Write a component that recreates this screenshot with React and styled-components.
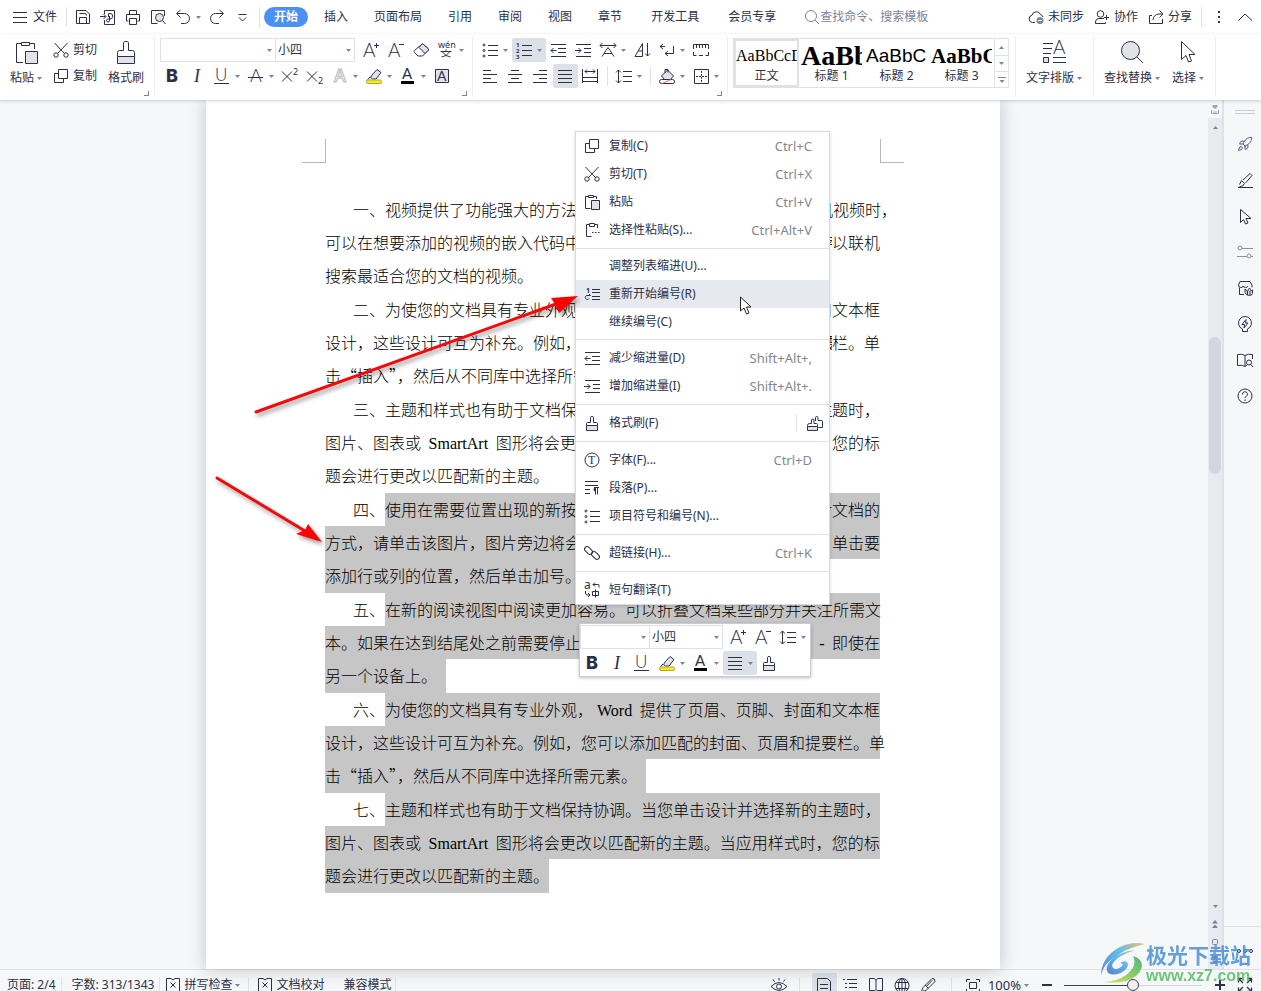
import React from "react";
import styled, { createGlobalStyle, css } from "styled-components";
import { Rocket } from "lucide-react";

const ink = "#2b3048";
const line = "#dfe1e8";
const soft = "#7a84a0";
const uiFont = `"Noto Sans", "Noto Sans CJK SC", sans-serif`;

const GlobalStyle = createGlobalStyle`
    * { box-sizing: border-box; }
    body {
        margin: 0;
        overflow: hidden;
        background: #f5f7f9;
        color: ${ink};
        font-family: ${uiFont};
        font-size: 12px;
        line-height: 16px;
    }
    button, input, select {
        font: inherit;
        color: inherit;
    }
`;

/* ---------- icons ---------- */

const Svg = styled.svg`
    display: block;
    flex: none;
    fill: none;
    stroke: ${(props) => props.$tone || ink};
    stroke-width: 1;
    overflow: visible;

    text {
        stroke: none;
        fill: ${ink};
    }
    .fill { fill: #e1e3e9; }
    .white { fill: #fff; }
    .solid { fill: ${ink}; stroke: none; }
`;

const thin = { fontFamily: "Lato", fontWeight: 300 };

const glyphs = {
    menu: <path d="M1 3.5h14M1 8.5h14M1 13.5h14" />,
    save: <path d="M1.5 14.5v-13h9.5l3.5 3.5v9.5zM4.5 14.5v-6h7v6M4.5 4.5h5q2 0 2 2" />,
    exportPdf: <path d="M4.5 5V1.5h10v14h-10V11M0 7.5h5.500M3.500 5l2.500 2.500L3.500 10M8.500 8V4.500h1.500a2.500 2.500 0 0 1 0 5.500H8a1.500 1.500 0 1 0 1.500 1.500V7" />,
    print: <><path d="M4.500 5V1.500h7V5M3.500 12h-2V5.500h13V12h-2" /><path className="white" d="M4.500 9.500h7v6h-7z" /></>,
    preview: <><path d="M14.500 7V1.500h-13v13h6" /><circle className="fill" cx="9.500" cy="8.500" r="4" /><path d="M12.500 11.500l3 3.500" /></>,
    undo: <path d="M5.500 1L1.500 4.500l4 4M2 4.500h7.500a5 5 0 0 1 0 10H6" />,
    redo: <path d="M10.500 1l4 3.500-4 4M14 4.500H6.500a5 5 0 0 0 0 10H10" />,
    more: <path d="M4.500 5.500h8M5 8.500l3.500 3.500L12 8.500" />,
    search: <><circle cx="7" cy="7" r="5.500" /><path d="M11 11l4 4" /></>,
    cloud: <><path d="M7 13.500H4.500a3.700 3.700 0 0 1-.5-7.300 4.500 4.500 0 0 1 8.600-.5 3.500 3.500 0 0 1 2.400 2.300" /><circle cx="12" cy="11.500" r="3.500" fill="#7a84a0" stroke="none" /><path stroke="#fff" d="M10 11.500h4" /></>,
    person: <><circle cx="6.500" cy="5" r="3.300" /><path d="M10 9.500H5a3.500 3.500 0 0 0-3.500 3.500v1.500h10V13M12.500 6v5M10 8.500h5" /></>,
    share: <><path d="M11.500 1.500L15 5l-3.500 3.500M14.500 5H11a6 6 0 0 0-6 6" /><path d="M4 6.500H1.500v8h13V10" /></>,
    dots: <path className="solid" d="M7 2h2v2H7zM7 7h2v2H7zM7 12h2v2H7z" />,
    chevron: <path d="M1.500 11.500L8 5l7 6.500" />,
    paste: <><path d="M7 3.500H2.500v19H9M15 3.500h5.500V9M7.500 2.500h8v3h-8z" /><path className="fill" d="M11.500 11.500h12v12h-12z" /></>,
    cut: <><circle cx="3" cy="13" r="2.200" /><circle cx="13" cy="13" r="2.200" /><path d="M1.500 1l10 10.500M14.500 1l-10 10.500" /></>,
    copy: <path d="M5.500 1.500h9v9h-9zM5.500 5.500h-4v9h9v-4" />,
    brushBig: <><path d="M9.500 10.500v-8q0-1 2.500-1t2.500 1v8h4q2 0 2 2v4h-17v-4q0-2 2-2z" /><path className="fill" d="M3.500 16.500h17v7h-17z" /></>,
    grow: <><text x="0" y="15" fontSize="19" style={thin}>A</text><path d="M11 3.500h5M13.500 1v5" /></>,
    shrink: <><text x="0" y="15" fontSize="19" style={thin}>A</text><path d="M11 2.500h5" /></>,
    eraser: <><path d="M8.500 2.500q1-1 2 0l4.500 4q1 1 0 2l-5.500 5.500H5l-3.500-3.500q-1-1 0-2z" /><path className="fill" d="M8.500 2.500q1-1 2 0l4.500 4q1 1 0 2l-3 3-6-6z" /></>,
    pinyin: <><text x="0" y="6" fontSize="9">wén</text><path d="M8 7.500v2M2.500 9.500h11M4.500 10q3 4.500 8 5M11.500 10q-3 4.500-8 5" /></>,
    bold: <text x="2" y="14" fontSize="18" fontWeight="800" fontFamily="Inter">B</text>,
    italic: <text x="5" y="14" fontSize="18" fontStyle="italic" fontFamily="Liberation Serif">I</text>,
    underline: <><text x="1" y="13" fontSize="17" style={thin}>U</text><path d="M0 15.500h15" /></>,
    strike: <><text x="2" y="14" fontSize="18" style={thin}>A</text><path d="M0 9.500h15" /></>,
    sup: <><path d="M0 3.500l10 10M10 3.500l-10 10" /><text x="11" y="7" fontSize="9">2</text></>,
    sub: <><path d="M0 3.500l10 10M10 3.500l-10 10" /><text x="11" y="16" fontSize="9">2</text></>,
    effect: <text x="2" y="14" fontSize="18" fontFamily="Open Sans" fontWeight="600" style={{ fill: "#fff", stroke: "#b4b7c0" }}>A</text>,
    marker: <><path className="fill" d="M6 7l5-5.500 4 3L10 11H6.500L4.500 9.500z" /><path d="M4 9l-2.500 3" /><rect x="0.500" y="12" width="15" height="3.500" rx="1.500" fill="#ffee00" stroke="#a9a45a" /></>,
    fontColor: <><text x="2" y="11" fontSize="15" fontFamily="Lato">A</text><path d="M1 14.500h13" stroke="#000" strokeWidth="3" /></>,
    boxed: <><path className="fill" d="M1.500 1.500h13v13h-13z" /><text x="3" y="13" fontSize="14" fontFamily="Lato">A</text></>,
    bullets: <><circle cx="2" cy="3" r="1" /><circle cx="2" cy="8.500" r="1" /><circle cx="2" cy="14" r="1" /><path d="M6 3.500h10M6 8.500h10M6 13.500h10" /></>,
    numbers: <><text x="0" y="5" fontSize="6" fontWeight="700">1</text><text x="0" y="11" fontSize="6" fontWeight="700">2</text><text x="0" y="17" fontSize="6" fontWeight="700">3</text><path d="M6 3.500h10M6 8.500h10M6 13.500h10" /></>,
    outdent: <path d="M1 2.500h15M8 6.500h8M8 10.500h8M1 14.500h15M1 8.500h5.500M3.500 6L1 8.500 3.500 11" />,
    indent: <path d="M1 2.500h15M9 6.500h7M9 10.500h7M1 14.500h15M0 8.500h6M3.500 6L6 8.500 3.500 11" />,
    scale: <path d="M0 3.500h16M2.500 1L0 3.500 2.500 6M13.500 1L16 3.500 13.500 6M2 14.500l6-9 6 9M4 11.500h8" />,
    sort: <path d="M1 14.500L8.500 1.500V14.500zM4.500 9h4M13.500 1v13M11 11.500l2.500 2.500 2.500-2.500" />,
    wrap: <path d="M4 2L1 4.500 4 7M1 4.500h5M14.500 4v7.500H6M9 9l-3 2.500L9 14" />,
    ruler: <path d="M.5 7V2.500h15V7M3.500 3v3M6.500 3v3M9.500 3v3M12.500 3v3M.5 10v3.500h3M6 13.500h4M15.500 10v3.500h-3" />,
    left: <path d="M1 2.500h8M1 6.500h14M1 10.500h8M1 14.500h14" />,
    center: <path d="M4 2.500h8M1 6.500h14M4 10.500h8M1 14.500h14" />,
    right: <path d="M7 2.500h8M1 6.500h14M7 10.500h8M1 14.500h14" />,
    justify: <path d="M1 2.500h14M1 6.500h14M1 10.500h14M1 14.500h14" />,
    spread: <path d="M.5 1v14M15.500 1v14M3 3.500h10M5 1.500l-2 2 2 2M11 1.500l2 2-2 2M0 9.500h15M0 13.500h15" />,
    spacing: <path d="M2.500 2v13M0 4.500L2.500 2 5 4.500M0 12.500L2.500 15 5 12.500M7 3.500h9M7 8.500h9M7 13.500h9" />,
    bucket: <><path className="fill" d="M2.500 8L8.500 2l6 6-3 3.500h-6z" /><path d="M6 5V1.500h3v3" /><rect x="0.500" y="11.500" width="15" height="4" rx="2" fill="#fff" /><path d="M3 15.500l9-4" stroke="#e2746c" /></>,
    border: <><path d="M1.500 1.500h14v14h-14z" /><path d="M8.500 3v11M3 8.500h11" strokeDasharray="2 1" /></>,
    layout: <><path d="M1 3.500h10M1 8.500h9M1 13.500h8M11 22.500h13M11 17.500h13" /><path className="fill" d="M1.500 17.500h5v5h-5z" /><text x="11" y="14" fontSize="19" style={thin}>A</text></>,
    find: <><circle className="fill" cx="10.500" cy="10.500" r="9" /><path d="M17 17l6 6" /></>,
    cursorBig: <path d="M5.500 1.500v18l4.500-4 2.500 6.500 3-1-2.500-6.500h6z" />,
    pasteSpecial: <path d="M5 2.500H2.500v12h5M11 2.500h2.500V6M5.500 1.500h5v3h-5zM8 10.500h1.500M11 10.500h1.500M14 10.500h1.500" />,
    pasteSmall: <><path d="M4 2.500H1.500v12h5M9 2.500h3.500V5M4.500 1.500h5v2h-5z" /><path className="fill" d="M7.500 6.500h8v9h-8z" /></>,
    restart: <><text x="2" y="7" fontSize="7" fontWeight="700">1</text><path d="M8 3.500h8M8 6.500h8M8 10.500h8M8 13.500h8M6.500 9.500H3a2 2 0 1 0 2 3M5 8l1.500 1.500" /></>,
    brush: <><path d="M6.500 7.500v-5q0-1 1.500-1t1.500 1v5h3q1 0 1 1v2h-11v-2q0-1 1-1z" /><path className="fill" d="M2.500 10.500h11v5h-11z" /></>,
    brushes: <><path d="M8.500 6V2.500q0-1 1.250-1t1.250 1V5.500h3.500q1 0 1 1v6h-4" /><path className="white" d="M4.500 8.500V5q0-1 1.250-1T7 5v3.500h2.500q1 0 1 1v2H.5v-1q0-2 2-2z" /><path className="fill" d="M.5 11.500h10v4H.5z" /></>,
    font: <><circle cx="8" cy="8" r="7" /><text x="4" y="12" fontSize="12" fontFamily="Liberation Serif">T</text></>,
    paragraph: <><path d="M1 1.500h13M1 5.500h13M1 9.500h5M1 13.500h5M13.500 7.500v7M11.500 7.500v7M10 7.500h5" /><path className="solid" d="M11.500 7.500v4a2 2 0 0 1 0-4z" /></>,
    link: <><rect x="0" y="3" width="9" height="5" rx="2.500" transform="rotate(45 4.500 5.500)" /><rect x="7" y="8" width="9" height="5" rx="2.500" transform="rotate(45 11.500 10.500)" /></>,
    translate: <><text x="0" y="7" fontSize="12">a</text><path d="M15 5.500V3q0-.5-1-.5H9M11 .5l-2 2 2 2M1.500 9v2q0 2 2 2h2M4 11l2 2-2 2M8.500 9.500h6v4h-6zM11.500 7.500v8" /></>,
    pen: <path d="M1 15.500h15M2.500 12.500l2-4 3 3q-1 3.500-5 3M6 8l7-6.500 2 2L8.500 11" />,
    cursor: <path d="M3.500 1.500v13l3-3 2 4.500 2.500-1-2-4.500h5z" />,
    sliders: <><circle cx="3" cy="4" r="2" /><path d="M5 4.500h11M0 12.500h10M14 12.500h2" /><circle cx="12" cy="12" r="2" /></>,
    shop: <><path d="M7 14.500H2.500V7.500M1.500 5L3 1.500h10L15 5v2.500M1.500 5q0 2.500 2.250 2.500T6 6q.5 1.500 2.500 1.500T11 6" /><path className="fill" d="M8 9q2 1 2.500 3Q11 9.500 12.500 8q1.500 1.500 1.500 3 .5-.5 1.500-1v3.500q-.5 2-3 2-3.500 0-4.500-3zM10.500 12v3M13 11v4" /></>,
    bulb: <path d="M5.500 13a6.500 6.500 0 1 1 5 0v2.500h-5zM9 3.500l-4 5h2.500l-.5 3.500 4-5H8.500z" />,
    bookSearch: <><path d="M8 3.500Q5 1.500.5 2.500v11q4.500-1 7.500 1 1-1 2-1.200M8 3.500v11M8 3.500q3-2 7.500-1V7" /><circle cx="12" cy="10.500" r="2.500" /><path d="M14 12.500l2 2.500" /></>,
    help: <><circle cx="8" cy="8" r="7" /><path d="M5.500 6.500a2.500 2.500 0 1 1 3.500 2q-1 .5-1 1.500M8 11.500V13" /></>,
    ellipsis: <><circle cx="2" cy="8" r="1.500" /><circle cx="8" cy="8" r="1.500" /><circle cx="14" cy="8" r="1.500" /></>,
    proof: <path d="M6 1.500H1.500v13H6l2 1.500 2-1.500h4.500v-13H10L8 3 6 1.500zM5.500 5.500l5 5M10.500 5.500l-5 5" />,
    eye: <><path d="M0 9.500q8-8 16 0-8 8-16 0zM8 3.500V1M3.500 4.500L2 2.500M12.500 4.500L14 2.500" /><circle cx="8" cy="9.500" r="2.500" /></>,
    pageView: <path d="M1.500 15.500v-14h10l3 3v11zM4 7.500h8M4 11.500h8" />,
    outline: <path d="M1 2.500h2M5 2.500h10M3 6.500h2M7 6.500h8M3 10.500h2M7 10.500h8M1 14.500h2M5 14.500h10" />,
    book: <path d="M8 3.500L6.500 1.500h-5v12h5L8 15.500l1.500-2h5v-12h-5L8 3.500v12" />,
    globe: <><circle cx="8" cy="8.500" r="7" /><ellipse cx="8" cy="8.500" rx="3.500" ry="7" /><path d="M2 5.500h12M2 11.500h12M8 1.500v14" /></>,
    write: <path d="M1 15.500l2-5L12 1.500q3-.5 3 3L6 13.500l-3 .5M5 8l3.500 3.500M12 3.500l-6 6.500" />,
    fit: <path d="M1.500 5V2.500H5M11 2.500h3.500V5M14.500 12v2.500H11M5 14.500H1.500V12M4.500 5.500h7v6h-7z" />,
    minus: <path d="M3 8h10" strokeWidth="2" />,
    plus: <path d="M3 8h10M8 3v10" strokeWidth="2" />,
    full: <path d="M1.500 5.500v-4h4M1.500 1.500L6 6M10.500 1.500h4v4M14.500 1.500L10 6M1.500 10.500v4h4M1.500 14.500L6 10M10.500 14.500h4v-4M14.500 14.500L10 10" strokeWidth="1.300" />,
};

const Icon = ({ name, size = 16, tone }) => (
    <Svg width={size} height={size} viewBox={`0 0 ${size} ${size}`} $tone={tone} aria-hidden="true">
        {glyphs[name]}
    </Svg>
);

const CaretSvg = styled.svg`
    display: block;
    flex: none;
    fill: ${soft};
    pointer-events: none;
`;

const Caret = (props) => (
    <CaretSvg width="5" height="3" viewBox="0 0 5 3" aria-hidden="true" {...props}>
        <path d="M0 0h5L2.500 3z" />
    </CaretSvg>
);

/* ---------- shared controls ---------- */

const BareButton = styled.button`
    display: flex;
    align-items: center;
    flex: none;
    padding: 0;
    border: 0;
    background: none;
    white-space: nowrap;
`;

const ToolButton = styled(BareButton)`
    width: ${(props) => (props.$split ? 34 : 25)}px;
    height: 24px;
    padding-left: 4px;
    gap: 5px;
    border-radius: 2px;
    background: ${(props) => (props.$active ? "#dce1e8" : "none")};
`;

const Tool = ({ icon, label, split, active, tone }) => (
    <ToolButton type="button" aria-label={label} $split={split} $active={active}>
        <Icon name={icon} tone={tone} />
        {split && <Caret />}
    </ToolButton>
);

const Rule = styled.span`
    flex: none;
    width: 1px;
    height: ${(props) => props.$tall || 20}px;
    margin: 0 ${(props) => props.$gap || 4}px;
    background: ${line};
`;

const ComboBox = styled.label`
    position: relative;
    flex: none;
    width: ${(props) => props.$width}px;
    height: 24px;
    border: 1px solid ${line};
    background: #fff;

    & + & {
        border-left: 0;
    }

    select {
        display: block;
        width: 100%;
        height: 22px;
        padding: 0 2px;
        border: 0;
        outline: 0;
        appearance: none;
        background: none;
    }
    ${CaretSvg} {
        position: absolute;
        top: 10px;
        right: 3px;
    }
`;

const Combo = ({ width, label, value }) => (
    <ComboBox $width={width}>
        <select aria-label={label}>
            <option>{value}</option>
        </select>
        <Caret />
    </ComboBox>
);

/* ---------- window frame ---------- */

const Window = styled.div`
    position: relative;
    display: flex;
    flex-direction: column;
    height: 100vh;
    overflow: hidden;
`;

const TitleBar = styled.header`
    display: flex;
    align-items: center;
    flex: none;
    height: 34px;
    padding: 0 8px 0 12px;
    background: #fff;
`;

const FileButton = styled(BareButton)`
    gap: 5px;
    margin-right: 5px;
`;

const Tabs = styled.nav`
    display: flex;
    gap: 6px;
`;

const Tab = styled(BareButton)`
    height: 20px;
    padding: 0 10px;
    border-radius: 10px;
    ${(props) => props.$apart && css`margin-left: 3px;`}
    ${(props) => props.$active && css`
        background: #4a90f5;
        color: #fff;
        font-weight: 700;
    `}
`;

const Search = styled.label`
    display: flex;
    align-items: center;
    flex: 0 1 140px;
    min-width: 0;
    margin-left: 18px;

    input {
        width: 100%;
        min-width: 0;
        padding: 0;
        border: 0;
        outline: 0;
        background: none;
    }
    input::placeholder {
        color: ${soft};
        opacity: 1;
    }
`;

const Account = styled.div`
    display: flex;
    align-items: center;
    gap: 10px;
    margin-left: auto;
`;

const AccountButton = styled(BareButton)`
    gap: 4px;
`;

/* ---------- ribbon ---------- */

const Ribbon = styled.div`
    position: relative;
    z-index: 2;
    display: flex;
    flex: none;
    height: 66px;
    background: #fff;
    box-shadow: 0 1px 3px rgba(60, 66, 84, 0.25);
`;

const Group = styled.section`
    position: relative;
    display: flex;
    flex: none;
    gap: ${(props) => props.$gap || 0}px;
    height: 61px;
    margin-top: 2px;
    padding: 2px ${(props) => props.$right || 4}px 0 ${(props) => props.$left || 5}px;
    border-right: 1px solid #eceef2;
`;

const Corner = styled.i`
    position: absolute;
    right: 5px;
    bottom: 1px;
    width: 5px;
    height: 5px;
    border: solid ${soft};
    border-width: 0 1px 1px 0;
`;

const Rows = styled.div`
    display: flex;
    flex-direction: column;
    gap: 2px;
`;

const Row = styled.div`
    display: flex;
    align-items: center;
    height: 24px;
`;

const Spacer = styled.span`
    width: 4px;
`;

const BigButton = styled(BareButton)`
    flex-direction: column;
    gap: 3px;
    height: 50px;
    padding-top: 2px;
`;

const BigLabel = styled.span`
    display: flex;
    align-items: center;
    gap: 3px;
    line-height: 22px;
`;

const Big = ({ icon, label, caret = true }) => (
    <BigButton type="button">
        <Icon name={icon} size={24} />
        <BigLabel>{label}{caret && <Caret />}</BigLabel>
    </BigButton>
);

const SmallButton = styled(BareButton)`
    gap: 4px;
    height: 24px;
`;

const Gallery = styled.div`
    display: flex;
    width: 276px;
    height: 50px;
    border: 1px solid ${line};
`;

const StyleCard = styled(BareButton)`
    flex-direction: column;
    align-items: stretch;
    width: 65px;
    height: 48px;
    overflow: hidden;
    border: 2px solid ${(props) => (props.$active ? line : "transparent")};
    line-height: 18px;
`;

const Sample = styled.span`
    height: 28px;
    overflow: hidden;
    color: #000;
    text-align: left;
    line-height: 30px;
    font-family: ${(props) => (props.$sans ? "Liberation Sans" : "Liberation Serif")}, serif;
    font-size: ${(props) => props.$size}px;
    font-weight: ${(props) => (props.$bold ? 700 : 400)};
`;

const GalleryScroll = styled.div`
    display: grid;
    grid-template-rows: 1fr 1fr 1fr;
    flex: 1;
    border-left: 1px solid ${line};

    button + button {
        border-top: 1px solid ${line};
    }
    button {
        justify-content: center;
    }
`;

/* ---------- document ---------- */

const Workspace = styled.main`
    display: flex;
    flex: 1;
    min-height: 0;
`;

const Canvas = styled.div`
    display: flex;
    justify-content: center;
    flex: 1;
    min-width: 0;
    padding-right: 2px;
`;

const Paper = styled.article`
    position: relative;
    flex: none;
    width: 794px;
    padding-top: 39px;
    background: #fff;
    box-shadow: 0 0 16px rgba(40, 46, 60, 0.25);
`;

const CropMarks = styled.div`
    display: flex;
    justify-content: space-between;
    margin: 0 96px 30px;
`;

const CropMark = styled.i`
    width: 24px;
    height: 24px;
    border: solid #b9b9b9;
    border-width: ${(props) => (props.$right ? "0 0 1px 1px" : "0 1px 1px 0")};
`;

const Prose = styled.div`
    margin: 0 120px 0 119px;
    color: #000;
    font-family: "Noto Sans CJK SC", sans-serif;
    font-size: 16px;
    font-weight: 300;
    line-height: 33px;
`;

const Paragraph = styled.div``;

const TextLine = styled.div`
    display: flex;
    height: 33px;
    white-space: pre;

    &:first-child {
        padding-left: 28px;
    }
    &:last-child {
        height: 34px;
    }
`;

const Run = styled.span`
    background: ${(props) => (props.$selected ? "#c6c6c6" : "none")};
    ${(props) => props.$fill && css`
        flex: 1;
        min-width: 0;
    `}
    ${(props) => props.$clip && css`overflow: hidden;`}
    ${(props) => props.$mark && css`padding-right: 9px;`}
`;

const Latin = styled.span`
    padding: 0 4px;
    font-family: "Liberation Serif", serif;
    font-weight: 400;
`;

const paragraphs = [
    {
        marker: "一、",
        lines: [
            ["视频提供了功能强大的方法帮助您证明您的观点。当您单击联机视频时，"],
            ["可以在想要添加的视频的嵌入代码中进行粘贴。您也可以键入一个关键字", "以联机"],
            ["搜索最适合您的文档的视频。"],
        ],
    },
    {
        marker: "二、",
        lines: [
            ["为使您的文档具有专业外观，Word 提供了页眉、页脚、封面和", "文本框"],
            ["设计，这些设计可互为补充。例如，您可以添加匹配的封面、页眉和提要", "栏。单"],
            ["击“插入”，然后从不同库中选择所需元素。"],
        ],
    },
    {
        marker: "三、",
        lines: [
            ["主题和样式也有助于文档保持协调。当您单击设计并选择新的主", "题时，"],
            ["图片、图表或 SmartArt 图形将会更改以匹配新的主题。当应用样式时，", "您的标"],
            ["题会进行更改以匹配新的主题。"],
        ],
    },
    {
        marker: "四、",
        selected: true,
        lines: [
            ["使用在需要位置出现的新按钮在文档中保存时间。若要更改图片适应", "文档的"],
            ["方式，请单击该图片，图片旁边将会显示布局选项按钮。当处理表格时，", "单击要"],
            ["添加行或列的位置，然后单击加号。"],
        ],
    },
    {
        marker: "五、",
        selected: true,
        lines: [
            ["在新的阅读视图中阅读更加容易。可以折叠文档某些部分并关注所需文"],
            ["本。如果在达到结尾处之前需要停止读取，Word 会记住停止位置", " - 即使在"],
            ["另一个设备上。"],
        ],
    },
    {
        marker: "六、",
        selected: true,
        lines: [
            ["为使您的文档具有专业外观，Word 提供了页眉、页脚、封面和文本框"],
            ["设计，这些设计可互为补充。例如，您可以添加匹配的封面、页眉和提要栏。单"],
            ["击“插入”，然后从不同库中选择所需元素。"],
        ],
    },
    {
        marker: "七、",
        selected: true,
        end: true,
        lines: [
            ["主题和样式也有助于文档保持协调。当您单击设计并选择新的主题时，"],
            ["图片、图表或 SmartArt 图形将会更改以匹配新的主题。当应用样式时，您的标"],
            ["题会进行更改以匹配新的主题。"],
        ],
    },
];

// latin words get their own serif face
const mixed = (text) =>
    text.split(/([A-Za-z-]+)/).map((part, i) => (i % 2 ? <Latin key={i}>{part}</Latin> : part));

const Document = () => (
    <Prose>
        {paragraphs.map((p) => (
            <Paragraph key={p.marker}>
                {p.lines.map(([lead, tail], i) => {
                    const last = i === p.lines.length - 1;
                    return (
                        <TextLine key={i}>
                            {i === 0 && <Run>{p.marker}</Run>}
                            <Run
                                $selected={p.selected}
                                $fill={!last}
                                $clip={!!tail}
                                $mark={last && p.selected && !p.end}
                            >
                                {mixed(lead)}
                            </Run>
                            {tail && <Run $selected={p.selected}>{mixed(tail)}</Run>}
                        </TextLine>
                    );
                })}
            </Paragraph>
        ))}
    </Prose>
);

/* ---------- floating menu and toolbar ---------- */

const ContextMenu = styled.div`
    position: absolute;
    top: 31px;
    left: 369px;
    z-index: 1;
    width: 255px;
    border: 1px solid #d5dae4;
    background: #fff;
    box-shadow: 0 1px 3px rgba(40, 46, 60, 0.2);
`;

const MenuGroup = styled.div`
    padding: ${(props) => (props.$tight ? 3 : 4)}px 0;

    & + & {
        border-top: 1px solid ${line};
    }
    &:first-child {
        padding-top: 0;
    }
    &:last-child {
        padding-bottom: 0;
    }
`;

const MenuLine = styled.div`
    display: flex;
    align-items: center;
    background: ${(props) => (props.$active ? "#e6e9ef" : "none")};
`;

const MenuItem = styled(BareButton)`
    flex: 1;
    gap: 9px;
    height: 28px;
    padding: 0 17px 0 8px;
    line-height: 18px;
`;

const IconSlot = styled.span`
    width: 16px;
    height: 16px;
`;

const Shortcut = styled.span`
    margin-left: auto;
    color: #85878f;
    font-size: 13px;
`;

const BrushLock = styled(BareButton)`
    height: 18px;
    padding: 0 6px 0 10px;
    border-left: 1px solid ${line};
`;

const menu = [
    {
        items: [
            { icon: "copy", text: "复制(C)", keys: "Ctrl+C" },
            { icon: "cut", text: "剪切(T)", keys: "Ctrl+X" },
            { icon: "pasteSmall", text: "粘贴", keys: "Ctrl+V" },
            { icon: "pasteSpecial", text: "选择性粘贴(S)...", keys: "Ctrl+Alt+V" },
        ],
    },
    {
        tight: true,
        items: [
            { text: "调整列表缩进(U)..." },
            { icon: "restart", text: "重新开始编号(R)", active: true },
            { text: "继续编号(C)" },
        ],
    },
    {
        items: [
            { icon: "outdent", text: "减少缩进量(D)", keys: "Shift+Alt+," },
            { icon: "indent", text: "增加缩进量(I)", keys: "Shift+Alt+." },
        ],
    },
    { items: [{ icon: "brush", text: "格式刷(F)", lock: true }] },
    {
        items: [
            { icon: "font", text: "字体(F)...", keys: "Ctrl+D" },
            { icon: "paragraph", text: "段落(P)..." },
            { icon: "bullets", text: "项目符号和编号(N)..." },
        ],
    },
    { items: [{ icon: "link", text: "超链接(H)...", keys: "Ctrl+K" }] },
    { items: [{ icon: "translate", text: "短句翻译(T)" }] },
];

const MiniToolbar = styled.div`
    position: absolute;
    top: 523px;
    left: 373px;
    z-index: 1;
    display: flex;
    flex-direction: column;
    gap: 2px;
    width: 232px;
    padding: 1px 0;
    border: 1px solid #c9ccd4;
    background: #fff;
    box-shadow: 0 1px 3px rgba(40, 46, 60, 0.3);
`;

const Arrows = styled.svg`
    position: absolute;
    top: 0;
    left: 0;
    z-index: 1;
    pointer-events: none;
    filter: drop-shadow(2px 3px 2px rgba(0, 0, 0, 0.4));
`;

const Pointer = styled.svg`
    position: absolute;
    top: 196px;
    left: 534px;
    z-index: 2;
`;

/* ---------- scrollbar, side panel, status bar ---------- */

const ScrollRail = styled.div`
    display: flex;
    flex-direction: column;
    align-items: center;
    flex: none;
    width: 16px;
    border-right: 2px solid ${line};
    background: #e9eaf0;
`;

const RulerToggle = styled(BareButton)`
    justify-content: center;
    width: 100%;
    height: 18px;
    background: #f5f7f9;
`;

const RailButton = styled(BareButton)`
    justify-content: center;
    width: 14px;
    height: 18px;
`;

const RailTrack = styled.div`
    flex: 1;
    width: 12px;
    padding-top: 201px;
`;

const Thumb = styled.div`
    height: 137px;
    border-radius: 6px;
    background: #d3d6de;
`;

const SidePanel = styled.aside`
    display: flex;
    flex-direction: column;
    align-items: center;
    gap: 20px;
    flex: none;
    width: 37px;
    padding: 10px 0;
    padding-left: 4px;
`;

const Grip = styled.span`
    width: 20px;
    height: 4px;
    margin-bottom: 2px;
    border: solid #c9ccd2;
    border-width: 1px 0;
`;

const PanelFoot = styled.div`
    display: flex;
    justify-content: center;
    align-self: stretch;
    margin: auto 0 0 -4px;
    padding: 16px 0 0 4px;
    border-top: 1px solid ${line};
`;

const StatusBar = styled.footer`
    flex: none;
    height: 22px;
    overflow: hidden;
    border-top: 1px solid ${line};
    background: #f5f7f9;
`;

const StatusRow = styled.div`
    display: flex;
    align-items: center;
    height: 30px;
    padding: 0 8px 0 7px;
`;

const StatusButton = styled(BareButton)`
    gap: 3px;
    margin-right: ${(props) => props.$after || 0}px;
`;

const StatusText = styled.span`
    margin: 0 0 0 5px;
    white-space: nowrap;
`;

const Views = styled.div`
    display: flex;
    align-items: center;
    gap: 1px;
    margin-left: auto;
`;

const ZoomButton = styled(StatusButton)`
    margin: 0 10px 0 2px;
    font-size: 13px;
`;

const ZoomRange = styled.input`
    width: 138px;
    height: 16px;
    margin: 0 10px 0 9px;
    appearance: none;
    background: linear-gradient(90deg, #3b4361 50%, #cdd1da 50%) center / 100% 1px no-repeat;

    &::-webkit-slider-thumb {
        appearance: none;
        width: 12px;
        height: 12px;
        border: 1px solid #3f434f;
        border-radius: 50%;
        background: #f0f0f2;
    }
`;

const Watermark = styled.div`
    position: absolute;
    right: 10px;
    bottom: 6px;
    z-index: 3;
    display: flex;
    align-items: center;
    opacity: 0.85;
    pointer-events: none;
`;

const WatermarkText = styled.div`
    color: #4a90d6;
    font: 700 21px/26px "Noto Sans CJK SC", sans-serif;

    small {
        display: block;
        color: #55bd62;
        font: 700 16px/18px "Liberation Sans", sans-serif;
    }
`;

const sideIcons = [
    ["pen", "样式"],
    ["cursor", "选择"],
    ["sliders", "属性", "#8b93a8"],
    ["shop", "资源"],
    ["bulb", "推荐"],
    ["bookSearch", "查阅"],
    ["help", "帮助"],
];

const tabs = [
    ["开始"], ["插入"], ["页面布局"], ["引用"], ["审阅"], ["视图"], ["章节"],
    ["开发工具", true], ["会员专享", true],
];

function App() {
    return (
        <Window>
            <GlobalStyle />
            <TitleBar>
                <FileButton type="button"><Icon name="menu" />文件</FileButton>
                <Rule />
                <Tool icon="save" label="保存" />
                <Tool icon="exportPdf" label="输出为PDF" />
                <Tool icon="print" label="打印" />
                <Tool icon="preview" label="打印预览" />
                <Tool icon="undo" label="撤销" split />
                <Tool icon="redo" label="恢复" />
                <Tool icon="more" label="更多" />
                <Rule />
                <Tabs>
                    {tabs.map(([name, apart], i) => (
                        <Tab key={name} type="button" $active={i === 0} $apart={apart}>{name}</Tab>
                    ))}
                </Tabs>
                <Search>
                    <Icon name="search" tone={soft} />
                    <input type="text" aria-label="搜索" placeholder="查找命令、搜索模板" />
                </Search>
                <Account>
                    <AccountButton type="button"><Icon name="cloud" />未同步</AccountButton>
                    <AccountButton type="button"><Icon name="person" />协作</AccountButton>
                    <AccountButton type="button"><Icon name="share" />分享</AccountButton>
                    <Rule $gap={-1} />
                    <BareButton type="button" aria-label="选项"><Icon name="dots" /></BareButton>
                    <BareButton type="button" aria-label="收起功能区"><Icon name="chevron" /></BareButton>
                </Account>
            </TitleBar>

            <Ribbon>
                <Group $left={10} $right={10} $gap={11}>
                    <Big icon="paste" label="粘贴" />
                    <Rows>
                        <SmallButton type="button"><Icon name="cut" />剪切</SmallButton>
                        <SmallButton type="button"><Icon name="copy" />复制</SmallButton>
                    </Rows>
                    <Big icon="brushBig" label="格式刷" caret={false} />
                    <Corner />
                </Group>
                <Group>
                    <Rows>
                        <Row>
                            <Combo width={116} label="字体" value="" />
                            <Combo width={79} label="字号" value="小四" />
                            <Spacer />
                            <Tool icon="grow" label="增大字号" />
                            <Tool icon="shrink" label="减小字号" />
                            <Tool icon="eraser" label="清除格式" />
                            <Tool icon="pinyin" label="拼音指南" split />
                        </Row>
                        <Row>
                            <Tool icon="bold" label="加粗" />
                            <Tool icon="italic" label="倾斜" />
                            <Tool icon="underline" label="下划线" split />
                            <Tool icon="strike" label="删除线" split />
                            <Tool icon="sup" label="上标" />
                            <Tool icon="sub" label="下标" />
                            <Tool icon="effect" label="文字效果" split />
                            <Tool icon="marker" label="突出显示" split />
                            <Tool icon="fontColor" label="字体颜色" split />
                            <Tool icon="boxed" label="字符底纹" />
                        </Row>
                    </Rows>
                    <Corner />
                </Group>
                <Group>
                    <Rows>
                        <Row>
                            <Tool icon="bullets" label="项目符号" split />
                            <Tool icon="numbers" label="编号" split active />
                            <Tool icon="outdent" label="减少缩进量" />
                            <Tool icon="indent" label="增加缩进量" />
                            <Tool icon="scale" label="中文版式" split />
                            <Tool icon="sort" label="排序" />
                            <Tool icon="wrap" label="显示段落标记" split />
                            <Tool icon="ruler" label="制表位" />
                        </Row>
                        <Row>
                            <Tool icon="left" label="左对齐" />
                            <Tool icon="center" label="居中对齐" />
                            <Tool icon="right" label="右对齐" />
                            <Tool icon="justify" label="两端对齐" active />
                            <Tool icon="spread" label="分散对齐" />
                            <Rule />
                            <Tool icon="spacing" label="行距" split />
                            <Rule />
                            <Tool icon="bucket" label="底纹颜色" split />
                            <Tool icon="border" label="边框" split />
                        </Row>
                    </Rows>
                    <Corner />
                </Group>
                <Group $right={6}>
                    <Gallery>
                        <StyleCard type="button" $active>
                            <Sample $size={16}>AaBbCcDd</Sample>正文
                        </StyleCard>
                        <StyleCard type="button">
                            <Sample $size={28} $bold>AaBb</Sample>标题 1
                        </StyleCard>
                        <StyleCard type="button">
                            <Sample $size={19} $sans>AaBbC</Sample>标题 2
                        </StyleCard>
                        <StyleCard type="button">
                            <Sample $size={21} $bold>AaBbC</Sample>标题 3
                        </StyleCard>
                        <GalleryScroll>
                            <BareButton type="button" aria-label="上一行"><Caret transform="rotate(180)" /></BareButton>
                            <BareButton type="button" aria-label="下一行"><Caret /></BareButton>
                            <BareButton type="button" aria-label="更多样式">
                                <Svg width="8" height="8" viewBox="0 0 8 8" $tone={soft}>
                                    <path d="M0 1.500h8" />
                                    <path d="M1.500 4h5L4 7z" fill={soft} stroke="none" />
                                </Svg>
                            </BareButton>
                        </GalleryScroll>
                    </Gallery>
                </Group>
                <Group $left={10} $right={11}>
                    <Big icon="layout" label="文字排版" />
                </Group>
                <Group $left={10} $right={11} $gap={12}>
                    <Big icon="find" label="查找替换" />
                    <Big icon="cursorBig" label="选择" />
                </Group>
            </Ribbon>

            <Workspace>
                <Canvas>
                    <Paper>
                        <CropMarks>
                            <CropMark />
                            <CropMark $right />
                        </CropMarks>
                        <Document />

                        <ContextMenu role="menu">
                            {menu.map((group, i) => (
                                <MenuGroup key={i} $tight={group.tight}>
                                    {group.items.map((item) => (
                                        <MenuLine key={item.text} $active={item.active}>
                                            <MenuItem type="button" role="menuitem">
                                                {item.icon ? <Icon name={item.icon} /> : <IconSlot />}
                                                {item.text}
                                                {item.keys && <Shortcut>{item.keys}</Shortcut>}
                                            </MenuItem>
                                            {item.lock && (
                                                <BrushLock type="button" aria-label="连续格式刷"><Icon name="brushes" /></BrushLock>
                                            )}
                                        </MenuLine>
                                    ))}
                                </MenuGroup>
                            ))}
                        </ContextMenu>

                        <MiniToolbar>
                            <Row>
                                <Combo width={70} label="字体" value="" />
                                <Combo width={73} label="字号" value="小四" />
                                <Spacer />
                                <Tool icon="grow" label="增大字号" />
                                <Tool icon="shrink" label="减小字号" />
                                <Tool icon="spacing" label="行距" split />
                            </Row>
                            <Row>
                                <Tool icon="bold" label="加粗" />
                                <Tool icon="italic" label="倾斜" />
                                <Tool icon="underline" label="下划线" />
                                <Tool icon="marker" label="突出显示" split />
                                <Tool icon="fontColor" label="字体颜色" split />
                                <Tool icon="justify" label="对齐" split active />
                                <Tool icon="brush" label="格式刷" />
                            </Row>
                        </MiniToolbar>

                        <Arrows width="400" height="480" viewBox="0 0 400 480" aria-hidden="true">
                            <g stroke="#f40808" strokeWidth="3" strokeLinecap="round">
                                <path d="M50 312L350 204" />
                                <path d="M11 378L99 431" />
                            </g>
                            <g fill="#fe0000">
                                <path d="M372 196L345 198 349 204 353 213z" />
                                <path d="M116 442L102 424 99 430 90 434z" />
                            </g>
                        </Arrows>

                        <Pointer width="12" height="20" viewBox="0 0 12 20" aria-hidden="true">
                            <path d="M.5 1v14l3.500-3 2.500 6 2.500-1-2.500-6h4.500z" fill="#fff" stroke="#222" />
                        </Pointer>
                    </Paper>
                </Canvas>

                <ScrollRail>
                    <RulerToggle type="button" aria-label="标尺">
                        <Svg width="8" height="9" viewBox="0 0 8 9" $tone="#9aa5bf">
                            <path d="M1.500 0h5v2L4 4 1.500 2z" fill="#9aa5bf" stroke="none" />
                            <path d="M.5 5v3.500h7V5M3 6v2M5 6v2" />
                        </Svg>
                    </RulerToggle>
                    <RailButton type="button" aria-label="向上滚动"><Caret transform="rotate(180)" /></RailButton>
                    <RailTrack><Thumb /></RailTrack>
                    <RailButton type="button" aria-label="向下滚动"><Caret /></RailButton>
                    <RailButton type="button" aria-label="上一页">
                        <CaretSvg width="6" height="8" viewBox="0 0 6 8"><path d="M0 3.500L3 0l3 3.500zM0 8l3-3.500L6 8z" /></CaretSvg>
                    </RailButton>
                    <RailButton type="button" aria-label="选择浏览对象">
                        <Svg width="6" height="6" viewBox="0 0 6 6" $tone={soft}><rect x="0.500" y="0.500" width="5" height="5" rx="1" /></Svg>
                    </RailButton>
                    <RailButton type="button" aria-label="下一页">
                        <CaretSvg width="6" height="8" viewBox="0 0 6 8"><path d="M0 0h6L3 3.500zM0 4.500h6L3 8z" /></CaretSvg>
                    </RailButton>
                </ScrollRail>

                <SidePanel>
                    <Grip />
                    <BareButton type="button" aria-label="快速启动"><Rocket size={16} strokeWidth={1.5} color="#4f5b7c" /></BareButton>
                    {sideIcons.map(([name, label, tone]) => (
                        <BareButton key={name} type="button" aria-label={label}><Icon name={name} tone={tone} /></BareButton>
                    ))}
                    <PanelFoot>
                        <BareButton type="button" aria-label="更多"><Icon name="ellipsis" /></BareButton>
                    </PanelFoot>
                </SidePanel>
            </Workspace>

            <StatusBar>
                <StatusRow>
                    <StatusButton type="button">页面: 2/4</StatusButton>
                    <Rule $tall={16} $gap={5} />
                    <StatusText>字数: 313/1343</StatusText>
                    <Rule $tall={16} $gap={5} />
                    <StatusButton type="button"><Icon name="proof" />拼写检查<Caret /></StatusButton>
                    <Rule $tall={16} $gap={8} />
                    <StatusButton type="button" $after={19}><Icon name="proof" />文档校对</StatusButton>
                    <StatusButton type="button">兼容模式</StatusButton>
                    <Rule $tall={16} />
                    <Views>
                        <BareButton type="button" aria-label="护眼模式"><Icon name="eye" /></BareButton>
                        <Rule $tall={16} $gap={11} />
                        <Tool icon="pageView" label="页面视图" active />
                        <Tool icon="outline" label="大纲" />
                        <Tool icon="book" label="阅读版式" />
                        <Tool icon="globe" label="Web版式" />
                        <Tool icon="write" label="写作模式" />
                        <Rule $tall={16} $gap={9} />
                    </Views>
                    <Tool icon="fit" label="最佳显示比例" />
                    <ZoomButton type="button">100%<Caret /></ZoomButton>
                    <BareButton type="button" aria-label="缩小"><Icon name="minus" /></BareButton>
                    <ZoomRange type="range" min="0" max="100" defaultValue="50" aria-label="显示比例" />
                    <BareButton type="button" aria-label="放大"><Icon name="plus" /></BareButton>
                    <Rule $tall={1} $gap={4} />
                    <BareButton type="button" aria-label="全屏"><Icon name="full" /></BareButton>
                </StatusRow>
            </StatusBar>

            <Watermark>
                <svg width="46" height="42" viewBox="0 0 46 42" aria-hidden="true">
                    <defs>
                        <linearGradient id="sky" x1="0" y1="1" x2="1" y2="0">
                            <stop offset="0" stopColor="#3a6fc4" />
                            <stop offset="0.6" stopColor="#4db4ea" />
                            <stop offset="1" stopColor="#f2b35a" />
                        </linearGradient>
                        <linearGradient id="leaf" x1="0" y1="1" x2="1" y2="0">
                            <stop offset="0" stopColor="#e9d94b" />
                            <stop offset="0.5" stopColor="#7cc651" />
                            <stop offset="1" stopColor="#35a869" />
                        </linearGradient>
                    </defs>
                    <path d="M45 2Q31-1 18 6 2 15 1 33q3-12 14-18Q24 7 45 2z" fill="url(#sky)" />
                    <path d="M36 8Q20 9 11 18 4 26 8 31q7 4 16-2 6-5 3-9-3-2-7 1 4 0 2 3-5 5-9 2-3-4 5-10 7-5 18-8z" fill="url(#sky)" />
                    <path d="M33 14q10 3 9 11-3 10-16 14-12 3-22 1 14-1 22-7 12-9 7-19z" fill="url(#leaf)" />
                </svg>
                <WatermarkText>
                    极光下载站
                    <small>www.xz7.com</small>
                </WatermarkText>
            </Watermark>
        </Window>
    );
}

export default App;
